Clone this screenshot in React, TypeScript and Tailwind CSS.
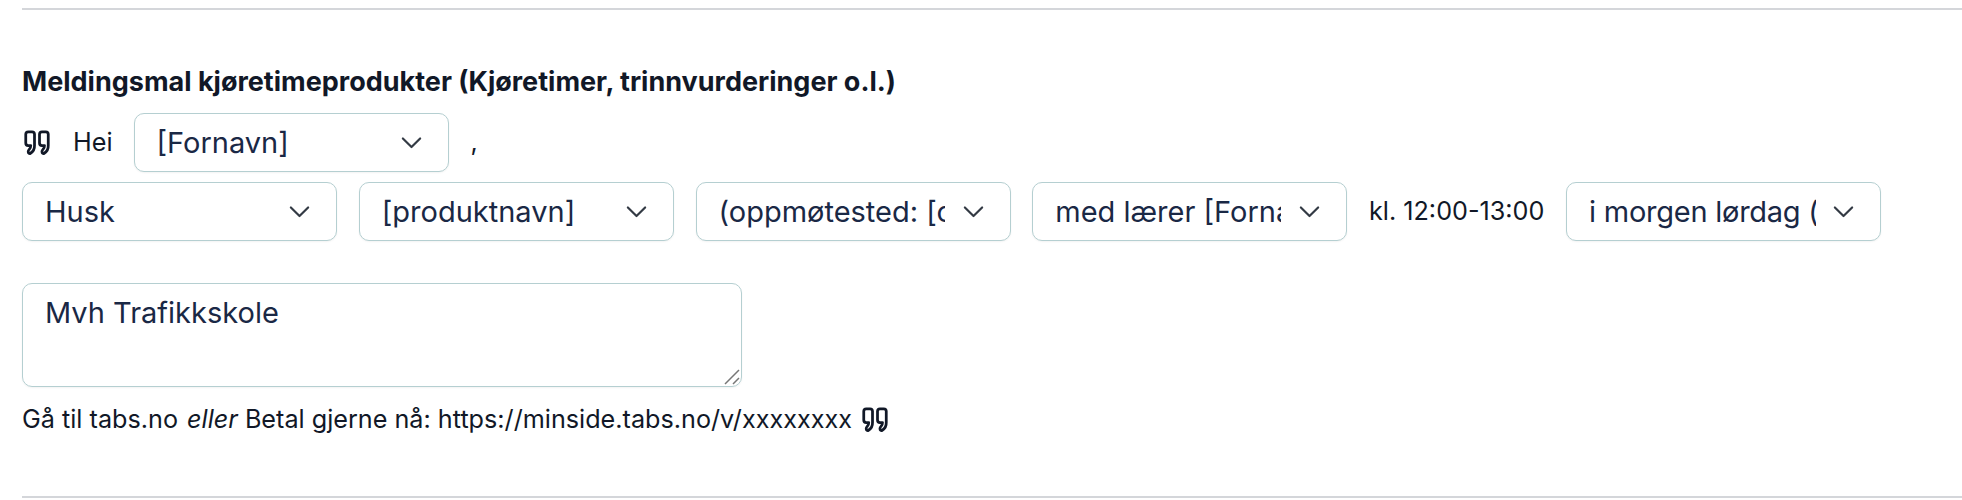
import React from "react";

function Quote() {
  return (
    <svg width="30" height="30" viewBox="0 0 24 24" fill="none" stroke="#111827" strokeWidth="2.2" strokeLinecap="round" strokeLinejoin="round" className="shrink-0">
      <path d="M5 3h3a2 2 0 0 1 2 2v9a7 7 0 0 1-3.2 6.2c-.9.6-1.8-.1-1.8-1v-.7c0-.6.4-1 .8-1.4.9-.8 1.2-1.8 1.2-3.1H5a2 2 0 0 1-2-2V5a2 2 0 0 1 2-2z" />
      <path d="M16 3h3a2 2 0 0 1 2 2v9a7 7 0 0 1-3.2 6.2c-.9.6-1.8-.1-1.8-1v-.7c0-.6.4-1 .8-1.4.9-.8 1.2-1.8 1.2-3.1h-2a2 2 0 0 1-2-2V5a2 2 0 0 1 2-2z" />
    </svg>
  );
}

function Select({ value, tight }: { value: string; tight?: boolean }) {
  return (
    <div className="relative w-[315px] h-[59px] shrink-0">
      <select
        defaultValue={value}
        className={
          "appearance-none w-full h-full bg-white border border-[#b5cfd1] rounded-[10px] pl-[22px] text-[29px] leading-[40px] text-[#1a2845] shadow-[0_1px_2px_rgba(0,0,0,0.05)] outline-none " +
          (tight ? "pr-[64px] tracking-[-0.25px]" : "pr-[65px]")
        }
      >
        <option value={value}>{value}</option>
      </select>
      <svg className="absolute right-[26px] top-[18px] pointer-events-none" width="23" height="23" viewBox="0 0 20 20" fill="none" stroke="#333a44" strokeWidth="1.9" strokeLinecap="round" strokeLinejoin="round">
        <path d="M2.5 6.5 10 14l7.5-7.5" />
      </svg>
    </div>
  );
}

export default function App() {
  return (
    <div className="w-[1962px] h-[500px] bg-white overflow-hidden font-['Inter',sans-serif] text-[#111827]">
      <div className="h-[2px] mt-[8px] bg-[#d4d6da] ml-[22px]" />
      <div className="pl-[22px]">
        <h2 className="mt-[54px] text-[27px] leading-[36px] font-bold text-[#111827]">
          Meldingsmal kjøretimeprodukter (Kjøretimer, trinnvurderinger o.l.)
        </h2>
        <div className="mt-[13px] flex items-center h-[59px]">
          <Quote />
          <span className="ml-[21px] text-[25.2px]">Hei</span>
          <div className="ml-[21px]"><Select value="[Fornavn]" /></div>
          <span className="ml-[22px] text-[25.2px]">,</span>
        </div>
        <div className="mt-[10px] flex items-center gap-[21.75px]">
          <Select value="Husk" />
          <Select value="[produktnavn]" />
          <Select value="(oppmøtested: [oppmøtested])" />
          <Select value="med lærer [Fornavn]" />
          <span className="text-[25.2px] whitespace-nowrap">kl. 12:00-13:00</span>
          <Select value="i morgen lørdag (dato)" tight />
        </div>
        <div className="relative mt-[42px] w-[720px] h-[104px]">
          <textarea
            defaultValue="Mvh Trafikkskole"
            className="block w-full h-full resize-none border border-[#b5cfd1] rounded-[10px] px-[22px] py-[9px] text-[29px] leading-[40px] text-[#1a2845] shadow-[0_1px_2px_rgba(0,0,0,0.05)] outline-none"
          />
          <svg className="absolute right-[2px] bottom-[2px] pointer-events-none" width="16" height="16" viewBox="0 0 16 16" fill="none" stroke="#777" strokeWidth="1.5">
            <path d="M1 15 15 1M9 15l6-6" />
          </svg>
        </div>
        <div className="mt-[14px] flex items-center text-[25.2px] whitespace-pre">
          <span>Gå til tabs.no <em className="ml-[2px]">eller</em> Betal gjerne nå: https://minside.tabs.no/v/xxxxxxxx</span>
          <span className="ml-[8px] flex"><Quote /></span>
        </div>
      </div>
      <div className="h-[2px] mt-[57px] bg-[#d4d6da] ml-[22px]" />
    </div>
  );
}
